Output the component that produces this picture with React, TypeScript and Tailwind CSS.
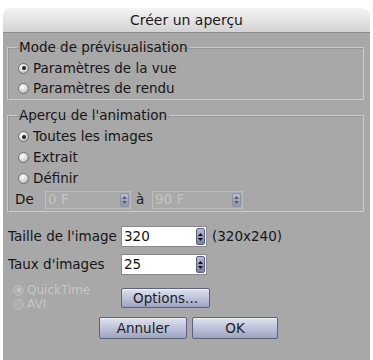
import clsx from 'clsx'

function Radio({ checked, disabled }: { checked?: boolean; disabled?: boolean }) {
  return (
    <span
      className={clsx(
        'w-[11px] h-[11px] rounded-full border flex items-center justify-center shrink-0',
        disabled
          ? 'border-[#bdbdbd] bg-[#b0b0b0]'
          : 'border-[#707070] bg-[radial-gradient(circle_at_40%_35%,#ffffff,#d4d4d4_55%,#9c9c9c)]'
      )}
    >
      {checked && (
        <span className={clsx('w-[4px] h-[4px] rounded-full', disabled ? 'bg-[#c8c8c8]' : 'bg-[#1e1e1e]')} />
      )}
    </span>
  )
}

function Spinner({ disabled }: { disabled?: boolean }) {
  return (
    <span
      className={clsx(
        'w-[9px] self-stretch my-[1px] mr-[1px] rounded-[2px] border flex flex-col items-center justify-center gap-[2px]',
        disabled
          ? 'border-[#8d90a6] bg-gradient-to-b from-[#b9bccd] to-[#9296b0]'
          : 'border-[#5e6384] bg-gradient-to-b from-[#b7bbd6] to-[#7c81a6]'
      )}
    >
      <svg width="5" height="3" viewBox="0 0 5 3">
        <path d="M0 3L2.5 0L5 3Z" fill={disabled ? '#555a72' : '#111'} />
      </svg>
      <svg width="5" height="3" viewBox="0 0 5 3">
        <path d="M0 0L2.5 3L5 0Z" fill={disabled ? '#555a72' : '#111'} />
      </svg>
    </span>
  )
}

function RadioRow({ label, checked, h = 'h-[20px]' }: { label: string; checked?: boolean; h?: string }) {
  return (
    <div className={clsx('flex items-center gap-[4px] pl-[10px]', h)}>
      <Radio checked={checked} />
      <span>{label}</span>
    </div>
  )
}

function Field({ value, disabled, w }: { value: string; disabled?: boolean; w: string }) {
  return (
    <div
      className={clsx(
        'flex items-stretch border',
        w,
        disabled
          ? 'h-[18px] border-[#bdbdbd] bg-[#a9a9a9] text-[#c4c4c4]'
          : 'h-[21px] border-[#8a8a8a] bg-white text-[#111]'
      )}
    >
      <span className="flex-1 flex items-center pl-[2px] leading-none">{value}</span>
      <Spinner disabled={disabled} />
    </div>
  )
}

function Button({ label, w, h }: { label: string; w: string; h: string }) {
  return (
    <button
      className={clsx(
        'flex items-center justify-center rounded-[2px] border border-[#5d6282] bg-gradient-to-b from-[#dfe2ef] via-[#bfc3da] to-[#9da2c0] text-[#1c1c1c] shadow-[inset_0_1px_0_#f2f3fa]',
        w,
        h
      )}
    >
      {label}
    </button>
  )
}

export default function App() {
  return (
    <div className="w-[373px] h-[360px] bg-white pt-[8px] pl-[3px] overflow-hidden font-['DejaVu_Sans','Liberation_Sans',sans-serif] text-[13.5px] text-[#161616]">
      <div className="w-[367px] h-[352px] flex flex-col rounded-t-[7px] overflow-hidden">
        <div className="h-[25px] shrink-0 flex items-center justify-center bg-gradient-to-b from-[#f4f4f4] to-[#d3d3d3] border-b border-[#8c8c8c] text-[14px] text-[#1a1a1a]">
          Créer un aperçu
        </div>
        <div className="flex-1 bg-[#a8a8a8] pl-[4px] pr-[6px] pt-[7px] flex flex-col">
          <fieldset className="border border-[#cbcbcb] pt-[3px] pb-[1px] shadow-[inset_1px_1px_0_#979797]">
            <legend className="ml-[9px] px-[2px] leading-[15px]">Mode de prévisualisation</legend>
            <RadioRow label="Paramètres de la vue" checked />
            <RadioRow label="Paramètres de rendu" />
          </fieldset>
          <fieldset className="mt-[8px] border border-[#cbcbcb] pt-[3px] pb-[1px] shadow-[inset_1px_1px_0_#979797]">
            <legend className="ml-[9px] px-[2px] leading-[15px]">Aperçu de l'animation</legend>
            <RadioRow label="Toutes les images" checked h="h-[21px]" />
            <RadioRow label="Extrait" h="h-[21px]" />
            <RadioRow label="Définir" h="h-[21px]" />
            <div className="h-[21px] flex items-center pl-[7px]">
              <span className="w-[30px]">De</span>
              <Field value="0 F" disabled w="w-[86px]" />
              <span className="w-[21px] pl-[5px]">à</span>
              <Field value="90 F" disabled w="w-[91px]" />
            </div>
          </fieldset>
          <div className="mt-[14px] flex items-center h-[21px]">
            <span className="w-[114px] pl-[1px]">Taille de l'image</span>
            <Field value="320" w="w-[86px]" />
            <span className="pl-[5px]">(320x240)</span>
          </div>
          <div className="mt-[7px] flex items-center h-[21px]">
            <span className="w-[114px] pl-[1px]">Taux d'images</span>
            <Field value="25" w="w-[86px]" />
          </div>
          <div className="mt-[8px] flex items-start">
            <div className="w-[114px] flex flex-col text-[#c6c6c6] text-[12px] pl-[6px]">
              <div className="flex items-center gap-[3px] h-[14px]">
                <Radio checked disabled />
                <span className="leading-[14px]">QuickTime</span>
              </div>
              <div className="flex items-center gap-[3px] h-[14px]">
                <Radio disabled />
                <span className="leading-[14px]">AVI</span>
              </div>
            </div>
            <div className="mt-[5px]">
              <Button label="Options..." w="w-[89px]" h="h-[20px]" />
            </div>
          </div>
          <div className="mt-[6px] flex justify-center gap-[5px] pl-[6px]">
            <Button label="Annuler" w="w-[88px]" h="h-[22px]" />
            <Button label="OK" w="w-[86px]" h="h-[22px]" />
          </div>
        </div>
      </div>
    </div>
  )
}
